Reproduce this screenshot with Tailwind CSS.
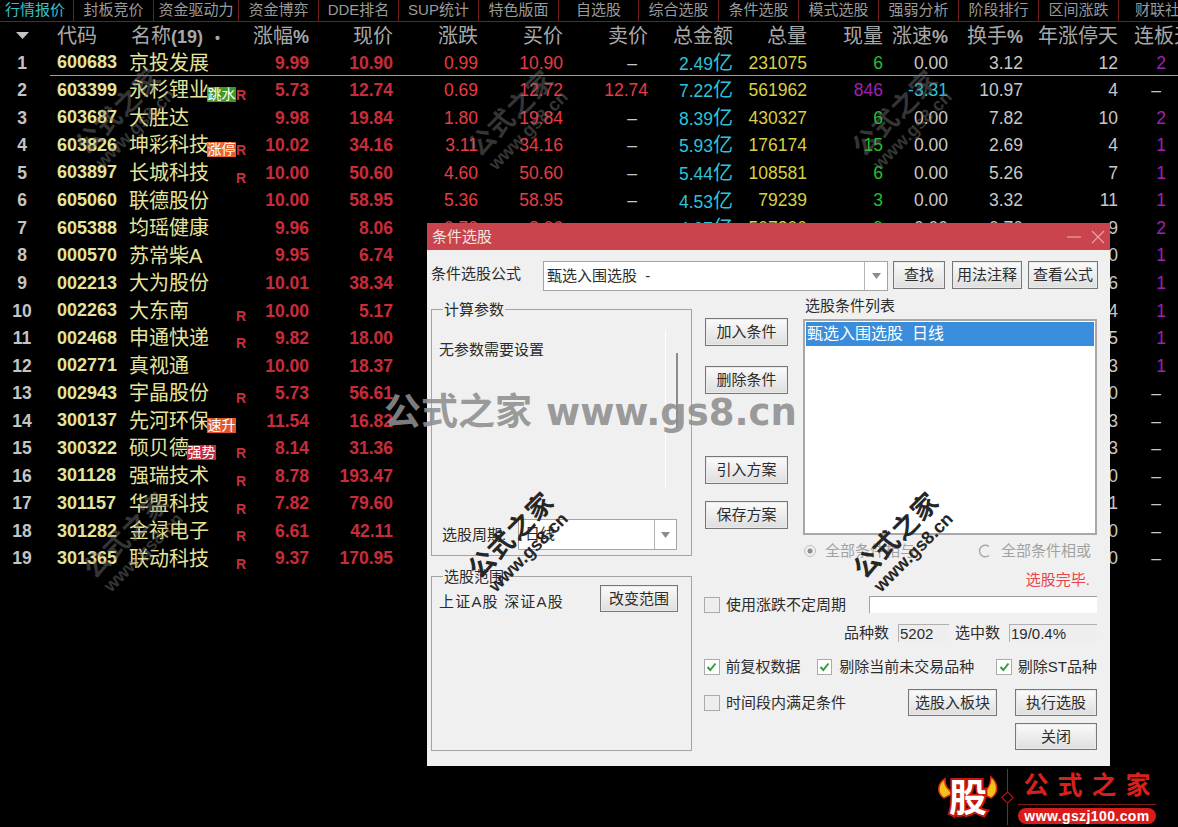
<!DOCTYPE html>
<html lang="zh">
<head>
<meta charset="utf-8">
<title>条件选股</title>
<script src="https://cdn.jsdelivr.net/npm/@tailwindcss/browser@4"></script>
</head>
<body class="bg-black">
<div class="relative w-[1178px] h-[827px] overflow-hidden bg-black font-['Liberation_Sans','Noto_Sans_CJK_SC',sans-serif]">

  <!-- tabs -->
  <nav class="flex h-[22px] border-b border-[#7a1c1c] text-[15px] leading-[20px] text-[#9a9a9a] whitespace-nowrap">
    <div class="w-[74px] shrink-0 pl-[5px] border-r border-[#6e1c1c] text-[#35c4cc]">行情报价</div>
    <div class="w-[80px] shrink-0 text-center border-r border-[#6e1c1c]">封板竞价</div>
    <div class="w-[85px] shrink-0 text-center border-r border-[#6e1c1c]">资金驱动力</div>
    <div class="w-[80px] shrink-0 text-center border-r border-[#6e1c1c]">资金博弈</div>
    <div class="w-[80px] shrink-0 text-center border-r border-[#6e1c1c]">DDE排名</div>
    <div class="w-[80px] shrink-0 text-center border-r border-[#6e1c1c]">SUP统计</div>
    <div class="w-[80px] shrink-0 text-center border-r border-[#6e1c1c]">特色版面</div>
    <div class="w-[80px] shrink-0 text-center border-r border-[#6e1c1c]">自选股</div>
    <div class="w-[80px] shrink-0 text-center border-r border-[#6e1c1c]">综合选股</div>
    <div class="w-[80px] shrink-0 text-center border-r border-[#6e1c1c]">条件选股</div>
    <div class="w-[80px] shrink-0 text-center border-r border-[#6e1c1c]">模式选股</div>
    <div class="w-[80px] shrink-0 text-center border-r border-[#6e1c1c]">强弱分析</div>
    <div class="w-[80px] shrink-0 text-center border-r border-[#6e1c1c]">阶段排行</div>
    <div class="w-[80px] shrink-0 text-center border-r border-[#6e1c1c]">区间涨跌</div>
    <div class="shrink-0 pl-[16px]">财联社</div>
  </nav>

  <!-- quote table -->
  <div class="relative grid grid-cols-[44px_85px_118px_62px_84px_85px_85px_85px_85px_74px_76px_65px_75px_95px_60px] grid-rows-[27px] auto-rows-[27.55px] items-center text-[17.5px] whitespace-nowrap">
    <!-- header -->
    <div class="flex justify-center"><svg width="13" height="7" viewBox="0 0 13 7"><path d="M0 0H13L6.500 7Z" fill="#c4c4c4"/></svg></div>
    <div class="pl-[13px] text-[20px] text-[#a8a8a8]">代码</div>
    <div class="pl-[2px] text-[20px] text-[#a8a8a8]">名称<span class="text-[18px] font-bold">(19)</span><span class="ml-[12px] text-[14px] font-bold">•</span></div>
    <div class="text-right text-[20px] text-[#a8a8a8]">涨幅<span class="text-[18px] font-bold">%</span></div>
    <div class="text-right text-[20px] text-[#a8a8a8]">现价</div>
    <div class="text-right text-[20px] text-[#a8a8a8]">涨跌</div>
    <div class="text-right text-[20px] text-[#a8a8a8]">买价</div>
    <div class="text-right text-[20px] text-[#a8a8a8]">卖价</div>
    <div class="text-right text-[20px] text-[#a8a8a8]">总金额</div>
    <div class="text-right text-[20px] text-[#a8a8a8]">总量</div>
    <div class="text-right text-[20px] text-[#a8a8a8]">现量</div>
    <div class="text-right text-[20px] text-[#a8a8a8]">涨速<span class="text-[18px] font-bold">%</span></div>
    <div class="text-right text-[20px] text-[#a8a8a8]">换手<span class="text-[18px] font-bold">%</span></div>
    <div class="text-right text-[20px] text-[#a8a8a8]">年涨停天</div>
    <div class="pl-[16px] text-[20px] text-[#a8a8a8] overflow-hidden">连板天</div>

    <!-- 1 -->
    <div class="text-center font-bold text-[#c4c4c4]">1</div><div class="pl-[13px] font-bold text-[18px] text-[#e4e49c]">600683</div><div class="text-[20px] text-[#e4e49c]">京投发展</div>
    <div class="text-right font-bold text-[#c82c3c]">9.99</div><div class="text-right font-bold text-[#c82c3c]">10.90</div>
    <div class="text-right text-[#e83c44]">0.99</div><div class="text-right text-[#e83c44]">10.90</div><div class="pr-[11px] text-right text-[#c8c8c8]">–</div>
    <div class="text-right text-[#2cc4dc]">2.49<span class="text-[20px]">亿</span></div><div class="text-right text-[#d8d044]">231075</div><div class="text-right text-[#22c032]">6</div><div class="text-right text-[#c8c8c8]">0.00</div><div class="text-right text-[#c8c8c8]">3.12</div><div class="text-right text-[#c8c8c8]">12</div><div class="pr-[12px] text-right text-[#a020b4]">2</div>
    <!-- 2 -->
    <div class="text-center font-bold text-[#c4c4c4]">2</div><div class="pl-[13px] font-bold text-[18px] text-[#e4e49c]">603399</div><div class="relative text-[20px] text-[#e4e49c]">永杉锂业<span class="absolute left-[78px] top-[12px] w-[29px] h-[15px] bg-[#3e9a22] text-white text-[14px] leading-[15px] text-center">跳水</span><span class="absolute left-[107px] top-[13px] text-[14px] leading-[15px] font-bold text-[#c8303c]">R</span></div>
    <div class="text-right font-bold text-[#c82c3c]">5.73</div><div class="text-right font-bold text-[#c82c3c]">12.74</div>
    <div class="text-right text-[#e83c44]">0.69</div><div class="text-right text-[#e83c44]">12.72</div><div class="text-right text-[#e83c44]">12.74</div>
    <div class="text-right text-[#2cc4dc]">7.22<span class="text-[20px]">亿</span></div><div class="text-right text-[#d8d044]">561962</div><div class="text-right text-[#a020b4]">846</div><div class="text-right text-[#2cc4dc]">-3.31</div><div class="text-right text-[#c8c8c8]">10.97</div><div class="text-right text-[#c8c8c8]">4</div><div class="pr-[17px] text-right text-[#c8c8c8]">–</div>
    <!-- 3 -->
    <div class="text-center font-bold text-[#c4c4c4]">3</div><div class="pl-[13px] font-bold text-[18px] text-[#e4e49c]">603687</div><div class="text-[20px] text-[#e4e49c]">大胜达</div>
    <div class="text-right font-bold text-[#c82c3c]">9.98</div><div class="text-right font-bold text-[#c82c3c]">19.84</div>
    <div class="text-right text-[#e83c44]">1.80</div><div class="text-right text-[#e83c44]">19.84</div><div class="pr-[11px] text-right text-[#c8c8c8]">–</div>
    <div class="text-right text-[#2cc4dc]">8.39<span class="text-[20px]">亿</span></div><div class="text-right text-[#d8d044]">430327</div><div class="text-right text-[#22c032]">6</div><div class="text-right text-[#c8c8c8]">0.00</div><div class="text-right text-[#c8c8c8]">7.82</div><div class="text-right text-[#c8c8c8]">10</div><div class="pr-[12px] text-right text-[#a020b4]">2</div>
    <!-- 4 -->
    <div class="text-center font-bold text-[#c4c4c4]">4</div><div class="pl-[13px] font-bold text-[18px] text-[#e4e49c]">603826</div><div class="relative text-[20px] text-[#e4e49c]">坤彩科技<span class="absolute left-[78px] top-[12px] w-[29px] h-[15px] bg-linear-to-r from-[#e8703c] to-[#e85a2c] text-white text-[14px] leading-[15px] text-center">涨停</span><span class="absolute left-[107px] top-[13px] text-[14px] leading-[15px] font-bold text-[#c8303c]">R</span></div>
    <div class="text-right font-bold text-[#c82c3c]">10.02</div><div class="text-right font-bold text-[#c82c3c]">34.16</div>
    <div class="text-right text-[#e83c44]">3.11</div><div class="text-right text-[#e83c44]">34.16</div><div class="pr-[11px] text-right text-[#c8c8c8]">–</div>
    <div class="text-right text-[#2cc4dc]">5.93<span class="text-[20px]">亿</span></div><div class="text-right text-[#d8d044]">176174</div><div class="text-right text-[#22c032]">15</div><div class="text-right text-[#c8c8c8]">0.00</div><div class="text-right text-[#c8c8c8]">2.69</div><div class="text-right text-[#c8c8c8]">4</div><div class="pr-[12px] text-right text-[#a020b4]">1</div>
    <!-- 5 -->
    <div class="text-center font-bold text-[#c4c4c4]">5</div><div class="pl-[13px] font-bold text-[18px] text-[#e4e49c]">603897</div><div class="relative text-[20px] text-[#e4e49c]">长城科技<span class="absolute left-[107px] top-[13px] text-[14px] leading-[15px] font-bold text-[#c8303c]">R</span></div>
    <div class="text-right font-bold text-[#c82c3c]">10.00</div><div class="text-right font-bold text-[#c82c3c]">50.60</div>
    <div class="text-right text-[#e83c44]">4.60</div><div class="text-right text-[#e83c44]">50.60</div><div class="pr-[11px] text-right text-[#c8c8c8]">–</div>
    <div class="text-right text-[#2cc4dc]">5.44<span class="text-[20px]">亿</span></div><div class="text-right text-[#d8d044]">108581</div><div class="text-right text-[#22c032]">6</div><div class="text-right text-[#c8c8c8]">0.00</div><div class="text-right text-[#c8c8c8]">5.26</div><div class="text-right text-[#c8c8c8]">7</div><div class="pr-[12px] text-right text-[#a020b4]">1</div>
    <!-- 6 -->
    <div class="text-center font-bold text-[#c4c4c4]">6</div><div class="pl-[13px] font-bold text-[18px] text-[#e4e49c]">605060</div><div class="text-[20px] text-[#e4e49c]">联德股份</div>
    <div class="text-right font-bold text-[#c82c3c]">10.00</div><div class="text-right font-bold text-[#c82c3c]">58.95</div>
    <div class="text-right text-[#e83c44]">5.36</div><div class="text-right text-[#e83c44]">58.95</div><div class="pr-[11px] text-right text-[#c8c8c8]">–</div>
    <div class="text-right text-[#2cc4dc]">4.53<span class="text-[20px]">亿</span></div><div class="text-right text-[#d8d044]">79239</div><div class="text-right text-[#22c032]">3</div><div class="text-right text-[#c8c8c8]">0.00</div><div class="text-right text-[#c8c8c8]">3.32</div><div class="text-right text-[#c8c8c8]">11</div><div class="pr-[12px] text-right text-[#a020b4]">1</div>
    <!-- 7 -->
    <div class="text-center font-bold text-[#c4c4c4]">7</div><div class="pl-[13px] font-bold text-[18px] text-[#e4e49c]">605388</div><div class="text-[20px] text-[#e4e49c]">均瑶健康</div>
    <div class="text-right font-bold text-[#c82c3c]">9.96</div><div class="text-right font-bold text-[#c82c3c]">8.06</div>
    <div class="text-right text-[#e83c44]">0.73</div><div class="text-right text-[#e83c44]">8.06</div><div class="pr-[11px] text-right text-[#c8c8c8]">–</div>
    <div class="text-right text-[#2cc4dc]">4.07<span class="text-[20px]">亿</span></div><div class="text-right text-[#d8d044]">507300</div><div class="text-right text-[#22c032]">9</div><div class="text-right text-[#c8c8c8]">0.00</div><div class="text-right text-[#c8c8c8]">0.70</div><div class="text-right text-[#c8c8c8]">9</div><div class="pr-[12px] text-right text-[#a020b4]">2</div>
    <!-- 8 -->
    <div class="text-center font-bold text-[#c4c4c4]">8</div><div class="pl-[13px] font-bold text-[18px] text-[#e4e49c]">000570</div><div class="text-[20px] text-[#e4e49c]">苏常柴A</div>
    <div class="text-right font-bold text-[#c82c3c]">9.95</div><div class="text-right font-bold text-[#c82c3c]">6.74</div><div class="col-span-8"></div><div class="text-right text-[#c8c8c8]">0</div><div class="pr-[12px] text-right text-[#a020b4]">1</div>
    <!-- 9 -->
    <div class="text-center font-bold text-[#c4c4c4]">9</div><div class="pl-[13px] font-bold text-[18px] text-[#e4e49c]">002213</div><div class="text-[20px] text-[#e4e49c]">大为股份</div>
    <div class="text-right font-bold text-[#c82c3c]">10.01</div><div class="text-right font-bold text-[#c82c3c]">38.34</div><div class="col-span-8"></div><div class="text-right text-[#c8c8c8]">6</div><div class="pr-[12px] text-right text-[#a020b4]">1</div>
    <!-- 10 -->
    <div class="text-center font-bold text-[#c4c4c4]">10</div><div class="pl-[13px] font-bold text-[18px] text-[#e4e49c]">002263</div><div class="relative text-[20px] text-[#e4e49c]">大东南<span class="absolute left-[107px] top-[13px] text-[14px] leading-[15px] font-bold text-[#c8303c]">R</span></div>
    <div class="text-right font-bold text-[#c82c3c]">10.00</div><div class="text-right font-bold text-[#c82c3c]">5.17</div><div class="col-span-8"></div><div class="text-right text-[#c8c8c8]">4</div><div class="pr-[12px] text-right text-[#a020b4]">1</div>
    <!-- 11 -->
    <div class="text-center font-bold text-[#c4c4c4]">11</div><div class="pl-[13px] font-bold text-[18px] text-[#e4e49c]">002468</div><div class="relative text-[20px] text-[#e4e49c]">申通快递<span class="absolute left-[107px] top-[13px] text-[14px] leading-[15px] font-bold text-[#c8303c]">R</span></div>
    <div class="text-right font-bold text-[#c82c3c]">9.82</div><div class="text-right font-bold text-[#c82c3c]">18.00</div><div class="col-span-8"></div><div class="text-right text-[#c8c8c8]">5</div><div class="pr-[12px] text-right text-[#a020b4]">1</div>
    <!-- 12 -->
    <div class="text-center font-bold text-[#c4c4c4]">12</div><div class="pl-[13px] font-bold text-[18px] text-[#e4e49c]">002771</div><div class="text-[20px] text-[#e4e49c]">真视通</div>
    <div class="text-right font-bold text-[#c82c3c]">10.00</div><div class="text-right font-bold text-[#c82c3c]">18.37</div><div class="col-span-8"></div><div class="text-right text-[#c8c8c8]">3</div><div class="pr-[12px] text-right text-[#a020b4]">1</div>
    <!-- 13 -->
    <div class="text-center font-bold text-[#c4c4c4]">13</div><div class="pl-[13px] font-bold text-[18px] text-[#e4e49c]">002943</div><div class="relative text-[20px] text-[#e4e49c]">宇晶股份<span class="absolute left-[107px] top-[13px] text-[14px] leading-[15px] font-bold text-[#c8303c]">R</span></div>
    <div class="text-right font-bold text-[#c82c3c]">5.73</div><div class="text-right font-bold text-[#c82c3c]">56.61</div><div class="col-span-8"></div><div class="text-right text-[#c8c8c8]">0</div><div class="pr-[17px] text-right text-[#c8c8c8]">–</div>
    <!-- 14 -->
    <div class="text-center font-bold text-[#c4c4c4]">14</div><div class="pl-[13px] font-bold text-[18px] text-[#e4e49c]">300137</div><div class="relative text-[20px] text-[#e4e49c]">先河环保<span class="absolute left-[78px] top-[12px] w-[29px] h-[15px] bg-[#e2582c] text-white text-[14px] leading-[15px] text-center">速升</span></div>
    <div class="text-right font-bold text-[#c82c3c]">11.54</div><div class="text-right font-bold text-[#c82c3c]">16.82</div><div class="col-span-8"></div><div class="text-right text-[#c8c8c8]">3</div><div class="pr-[17px] text-right text-[#c8c8c8]">–</div>
    <!-- 15 -->
    <div class="text-center font-bold text-[#c4c4c4]">15</div><div class="pl-[13px] font-bold text-[18px] text-[#e4e49c]">300322</div><div class="relative text-[20px] text-[#e4e49c]">硕贝德<span class="absolute left-[58px] top-[12px] w-[29px] h-[15px] bg-[#c8283c] text-white text-[14px] leading-[15px] text-center">强势</span><span class="absolute left-[107px] top-[13px] text-[14px] leading-[15px] font-bold text-[#c8303c]">R</span></div>
    <div class="text-right font-bold text-[#c82c3c]">8.14</div><div class="text-right font-bold text-[#c82c3c]">31.36</div><div class="col-span-8"></div><div class="text-right text-[#c8c8c8]">3</div><div class="pr-[17px] text-right text-[#c8c8c8]">–</div>
    <!-- 16 -->
    <div class="text-center font-bold text-[#c4c4c4]">16</div><div class="pl-[13px] font-bold text-[18px] text-[#e4e49c]">301128</div><div class="relative text-[20px] text-[#e4e49c]">强瑞技术<span class="absolute left-[107px] top-[13px] text-[14px] leading-[15px] font-bold text-[#c8303c]">R</span></div>
    <div class="text-right font-bold text-[#c82c3c]">8.78</div><div class="text-right font-bold text-[#c82c3c]">193.47</div><div class="col-span-8"></div><div class="text-right text-[#c8c8c8]">0</div><div class="pr-[17px] text-right text-[#c8c8c8]">–</div>
    <!-- 17 -->
    <div class="text-center font-bold text-[#c4c4c4]">17</div><div class="pl-[13px] font-bold text-[18px] text-[#e4e49c]">301157</div><div class="relative text-[20px] text-[#e4e49c]">华盟科技<span class="absolute left-[107px] top-[13px] text-[14px] leading-[15px] font-bold text-[#c8303c]">R</span></div>
    <div class="text-right font-bold text-[#c82c3c]">7.82</div><div class="text-right font-bold text-[#c82c3c]">79.60</div><div class="col-span-8"></div><div class="text-right text-[#c8c8c8]">1</div><div class="pr-[17px] text-right text-[#c8c8c8]">–</div>
    <!-- 18 -->
    <div class="text-center font-bold text-[#c4c4c4]">18</div><div class="pl-[13px] font-bold text-[18px] text-[#e4e49c]">301282</div><div class="relative text-[20px] text-[#e4e49c]">金禄电子<span class="absolute left-[107px] top-[13px] text-[14px] leading-[15px] font-bold text-[#c8303c]">R</span></div>
    <div class="text-right font-bold text-[#c82c3c]">6.61</div><div class="text-right font-bold text-[#c82c3c]">42.11</div><div class="col-span-8"></div><div class="text-right text-[#c8c8c8]">0</div><div class="pr-[17px] text-right text-[#c8c8c8]">–</div>
    <!-- 19 -->
    <div class="text-center font-bold text-[#c4c4c4]">19</div><div class="pl-[13px] font-bold text-[18px] text-[#e4e49c]">301365</div><div class="relative text-[20px] text-[#e4e49c]">联动科技<span class="absolute left-[107px] top-[13px] text-[14px] leading-[15px] font-bold text-[#c8303c]">R</span></div>
    <div class="text-right font-bold text-[#c82c3c]">9.37</div><div class="text-right font-bold text-[#c82c3c]">170.95</div><div class="col-span-8"></div><div class="text-right text-[#c8c8c8]">0</div><div class="pr-[17px] text-right text-[#c8c8c8]">–</div>

    <!-- selected row rule -->
    <div class="absolute left-[50px] right-0 top-[53px] h-px bg-[#b0aa28]"></div>
  </div>

  <!-- watermarks on the table -->
  <div class="absolute left-[125px] top-[118px] -translate-x-1/2 -translate-y-1/2 -rotate-45 flex flex-col items-center font-bold text-[#7a7a7a]/45"><span class="text-[26px] leading-[30px] tracking-[1px]">公式之家</span><span class="text-[18px] leading-[19px]">www.gs8.cn</span></div>
  <div class="absolute left-[518px] top-[120px] -translate-x-1/2 -translate-y-1/2 -rotate-45 flex flex-col items-center font-bold text-[#7a7a7a]/45"><span class="text-[26px] leading-[30px] tracking-[1px]">公式之家</span><span class="text-[18px] leading-[19px]">www.gs8.cn</span></div>
  <div class="absolute left-[902px] top-[120px] -translate-x-1/2 -translate-y-1/2 -rotate-45 flex flex-col items-center font-bold text-[#7a7a7a]/45"><span class="text-[26px] leading-[30px] tracking-[1px]">公式之家</span><span class="text-[18px] leading-[19px]">www.gs8.cn</span></div>
  <div class="absolute left-[133px] top-[542px] -translate-x-1/2 -translate-y-1/2 -rotate-45 flex flex-col items-center font-bold text-[#7a7a7a]/45"><span class="text-[26px] leading-[30px] tracking-[1px]">公式之家</span><span class="text-[18px] leading-[19px]">www.gs8.cn</span></div>

  <!-- dialog window -->
  <section class="absolute left-[427px] top-[223px] w-[683px] h-[543px] bg-[#f0f0f0] text-[15px] leading-[20px] text-[#2c2c2c] whitespace-nowrap">
    <header class="flex items-center h-[27px] pl-[5px] pr-[5px] bg-[#c9444c] text-[#f4e4e4]">
      <span>条件选股</span>
      <svg class="ml-auto" width="14" height="14" viewBox="0 0 14 14"><path d="M0 7H14" stroke="#e6a4a8" stroke-width="1.2"/></svg>
      <svg class="ml-[10px] mr-[0px]" width="14" height="14" viewBox="0 0 14 14"><path d="M1 1L13 13M13 1L1 13" stroke="#e6a4a8" stroke-width="1.2"/></svg>
    </header>

    <div class="flex items-start h-[30px] mt-[11px] pl-[4px]">
      <span class="w-[112px] mt-[3px]">条件选股公式</span>
      <div class="flex w-[345px] h-[30px] bg-white border border-[#a4a4a4]">
        <span class="flex-1 pl-[3px] pt-[4px]">甄选入围选股&nbsp;&nbsp;-</span>
        <span class="flex items-center justify-center w-[23px] border-l border-[#b4b4b4]"><svg width="9" height="6" viewBox="0 0 9 6"><path d="M0 0H9L4.500 6Z" fill="#8c8c8c"/></svg></span>
      </div>
      <button class="w-[52px] h-[28px] ml-[5px] border border-[#777] bg-linear-to-b from-[#fbfbfb] to-[#dedede] shadow-[inset_0_0_0_1px_#eaeaea]">查找</button>
      <button class="w-[70px] h-[28px] ml-[7px] border border-[#777] bg-linear-to-b from-[#fbfbfb] to-[#dedede] shadow-[inset_0_0_0_1px_#eaeaea]">用法注释</button>
      <button class="w-[70px] h-[28px] ml-[6px] border border-[#777] bg-linear-to-b from-[#fbfbfb] to-[#dedede] shadow-[inset_0_0_0_1px_#eaeaea]">查看公式</button>
    </div>

    <div class="flex items-start mt-[5px] pl-[4px]">
      <!-- left column -->
      <div class="w-[261px] pt-[13px]">
        <div class="relative flex flex-col justify-between h-[247px] pt-[30px] pb-[5px] border border-[#a4a4a4]">
          <span class="absolute left-[11px] -top-[10px] px-[1px] bg-[#f0f0f0]">计算参数</span>
          <span class="pl-[7px]">无参数需要设置</span>
          <span class="absolute left-[233px] top-[21px] w-px h-[157px] bg-white"></span>
          <span class="absolute left-[244px] top-[43px] w-[2px] h-[75px] bg-[#8c8c8c]"></span>
          <div class="flex items-center pl-[10px]">
            <span class="w-[76px]">选股周期:</span>
            <div class="flex w-[159px] h-[31px] bg-white border border-[#a4a4a4]">
              <span class="flex-1 pl-[6px] pt-[4px]">日线</span>
              <span class="flex items-center justify-center w-[22px] border-l border-[#b4b4b4]"><svg width="9" height="6" viewBox="0 0 9 6"><path d="M0 0H9L4.500 6Z" fill="#8c8c8c"/></svg></span>
            </div>
          </div>
        </div>
        <div class="relative flex items-start justify-between h-[175px] mt-[20px] pt-[8px] pl-[7px] pr-[13px] border border-[#a4a4a4]">
          <span class="absolute left-[11px] -top-[10px] px-[1px] bg-[#f0f0f0]">选股范围</span>
          <span class="mt-[7px] tracking-[1.2px]">上证A股 深证A股</span>
          <button class="w-[78px] h-[27px] border border-[#777] bg-linear-to-b from-[#fbfbfb] to-[#dedede] shadow-[inset_0_0_0_1px_#eaeaea]">改变范围</button>
        </div>
      </div>

      <!-- right area -->
      <div class="flex flex-col w-[393px] ml-[12px]">
        <div class="flex items-start">
          <div class="flex flex-col w-[83px] ml-[1px] pt-[22px]">
            <button class="h-[28px] border border-[#777] bg-linear-to-b from-[#fbfbfb] to-[#dedede] shadow-[inset_0_0_0_1px_#eaeaea]">加入条件</button>
            <button class="h-[28px] mt-[20px] border border-[#777] bg-linear-to-b from-[#fbfbfb] to-[#dedede] shadow-[inset_0_0_0_1px_#eaeaea]">删除条件</button>
            <button class="h-[28px] mt-[62px] border border-[#777] bg-linear-to-b from-[#fbfbfb] to-[#dedede] shadow-[inset_0_0_0_1px_#eaeaea]">引入方案</button>
            <button class="h-[28px] mt-[17px] border border-[#777] bg-linear-to-b from-[#fbfbfb] to-[#dedede] shadow-[inset_0_0_0_1px_#eaeaea]">保存方案</button>
          </div>
          <div class="w-[294px] ml-[15px]">
            <div class="h-[20px] mb-[3px] pl-[2px]">选股条件列表</div>
            <div class="h-[216px] p-px bg-white border-2 border-[#a8a8a8]">
              <div class="h-[24px] pl-[1px] text-[16px] leading-[24px] bg-[#3a8ddc] text-white">甄选入围选股&nbsp;&nbsp;日线</div>
            </div>
            <div class="flex items-center h-[16px] mt-[8px] text-[#a2a2a2]">
              <svg width="14" height="14" viewBox="0 0 14 14"><circle cx="7" cy="7" r="5.500" fill="none" stroke="#c0c0c0"/><circle cx="7" cy="7" r="2.500" fill="#8c8c8c"/></svg>
              <span class="ml-[8px]">全部条件相与</span>
              <svg class="ml-[63px]" width="14" height="14" viewBox="0 0 14 14"><path d="M11 2.500A5.800 5.800 0 1 0 11 11.500" fill="none" stroke="#a8a8a8" stroke-width="1.400"/></svg>
              <span class="ml-[9px]">全部条件相或</span>
            </div>
          </div>
        </div>
        <div class="h-[20px] mt-[11px] pr-[7px] text-right text-[15px] text-[#e8444c]">选股完毕.</div>
        <div class="flex items-center h-[17px] mt-[6px]">
          <span class="w-[16px] h-[16px] border border-[#aaa] bg-[#eeeeee]"></span>
          <span class="ml-[6px]">使用涨跌不定周期</span>
          <span class="ml-auto w-[228px] h-[17px] bg-white border-l border-t border-[#a0a0a0]"></span>
        </div>
        <div class="flex items-center justify-end h-[18px] mt-[11px]">
          <span>品种数</span>
          <span class="w-[51px] h-[18px] ml-[9px] pl-[1px] leading-[18px] bg-[#eeeeee] border-l border-t border-[#b0b0b0]">5202</span>
          <span class="ml-[6px]">选中数</span>
          <span class="w-[88px] h-[18px] ml-[9px] pl-[1px] leading-[18px] bg-[#eeeeee] border-l border-t border-[#b0b0b0]">19/0.4%</span>
        </div>
        <div class="flex items-center h-[16px] mt-[17px]">
          <span class="flex items-center justify-center w-[16px] h-[16px] border border-[#aaa] bg-white"><svg width="11" height="10" viewBox="0 0 11 10"><path d="M1.500 5L4.300 8L9.500 1.500" fill="none" stroke="#2e9e3a" stroke-width="2"/></svg></span>
          <span class="ml-[6px]">前复权数据</span>
          <span class="flex items-center justify-center w-[16px] h-[16px] ml-[16px] border border-[#aaa] bg-white"><svg width="11" height="10" viewBox="0 0 11 10"><path d="M1.500 5L4.300 8L9.500 1.500" fill="none" stroke="#2e9e3a" stroke-width="2"/></svg></span>
          <span class="ml-[7px]">剔除当前未交易品种</span>
          <span class="flex items-center justify-center w-[16px] h-[16px] ml-[22px] border border-[#aaa] bg-white"><svg width="11" height="10" viewBox="0 0 11 10"><path d="M1.500 5L4.300 8L9.500 1.500" fill="none" stroke="#2e9e3a" stroke-width="2"/></svg></span>
          <span class="ml-[6px]">剔除ST品种</span>
        </div>
        <div class="flex items-center h-[27px] mt-[14px]">
          <span class="w-[16px] h-[16px] border border-[#aaa] bg-[#eeeeee]"></span>
          <span class="ml-[6px]">时间段内满足条件</span>
          <button class="w-[89px] h-[27px] ml-auto border border-[#777] bg-linear-to-b from-[#fbfbfb] to-[#dedede] shadow-[inset_0_0_0_1px_#eaeaea]">选股入板块</button>
          <button class="w-[82px] h-[27px] ml-[18px] border border-[#777] bg-linear-to-b from-[#fbfbfb] to-[#dedede] shadow-[inset_0_0_0_1px_#eaeaea]">执行选股</button>
        </div>
        <button class="self-end w-[82px] h-[27px] mt-[7px] border border-[#777] bg-linear-to-b from-[#fbfbfb] to-[#dedede] shadow-[inset_0_0_0_1px_#eaeaea]">关闭</button>
      </div>
    </div>
  </section>

  <!-- watermarks over the dialog -->
  <div class="absolute left-[518px] top-[542px] -translate-x-1/2 -translate-y-1/2 -rotate-45 flex flex-col items-center font-bold text-[#262626]"><span class="text-[26px] leading-[30px] tracking-[1px]">公式之家</span><span class="text-[18px] leading-[19px]">www.gs8.cn</span></div>
  <div class="absolute left-[903px] top-[542px] -translate-x-1/2 -translate-y-1/2 -rotate-45 flex flex-col items-center font-bold text-[#262626]"><span class="text-[26px] leading-[30px] tracking-[1px]">公式之家</span><span class="text-[18px] leading-[19px]">www.gs8.cn</span></div>
  <div class="absolute left-[384px] top-[389px] whitespace-nowrap font-bold leading-[48px] text-[#8e8e8e]/90"><span class="text-[37px]">公式之家</span><span class="ml-[14px] text-[37px] font-['DejaVu_Sans',sans-serif]">www.gs8.cn</span></div>

  <!-- site logo -->
  <div class="absolute left-[936px] top-[769px] flex items-center h-[56px] whitespace-nowrap">
    <div class="relative w-[64px] h-[52px]">
      <svg class="absolute inset-0" width="64" height="52" viewBox="0 0 64 52"><path d="M9 8C2 12 0 22 8 27L18 22C12 20 8 14 9 8Z" fill="#f2c21c" stroke="#e03010" stroke-width="1.500"/><path d="M55 6C62 12 63 22 55 27L45 22C51 20 55 14 55 6Z" fill="#f2c21c" stroke="#e03010" stroke-width="1.500"/></svg>
      <span class="absolute left-[13px] top-[6px] text-[38px] leading-[42px] font-bold text-white [-webkit-text-stroke:4px_#c81810] [paint-order:stroke_fill]">股</span>
    </div>
    <div class="relative w-px h-[56px] ml-[7px] bg-[#a81818]"><span class="absolute -left-[4px] top-[24px] w-[9px] h-[9px] rotate-45 border border-[#c02020] bg-black"></span></div>
    <div class="flex flex-col items-center w-[138px] ml-[10px]">
      <span class="text-[25px] leading-[30px] font-bold tracking-[9px] pl-[9px] text-[#d8201c] font-['Liberation_Serif','Noto_Sans_CJK_SC',serif]">公式之家</span>
      <span class="w-full h-px mt-[3px] bg-[#7a1c1c]"></span>
      <span class="w-full h-[16px] mt-[3px] rounded-full bg-[#d81c1c] text-center text-[14px] leading-[16px] font-bold tracking-[0.4px] text-white">www.gszj100.com</span>
    </div>
  </div>
</div>
</body>
</html>
